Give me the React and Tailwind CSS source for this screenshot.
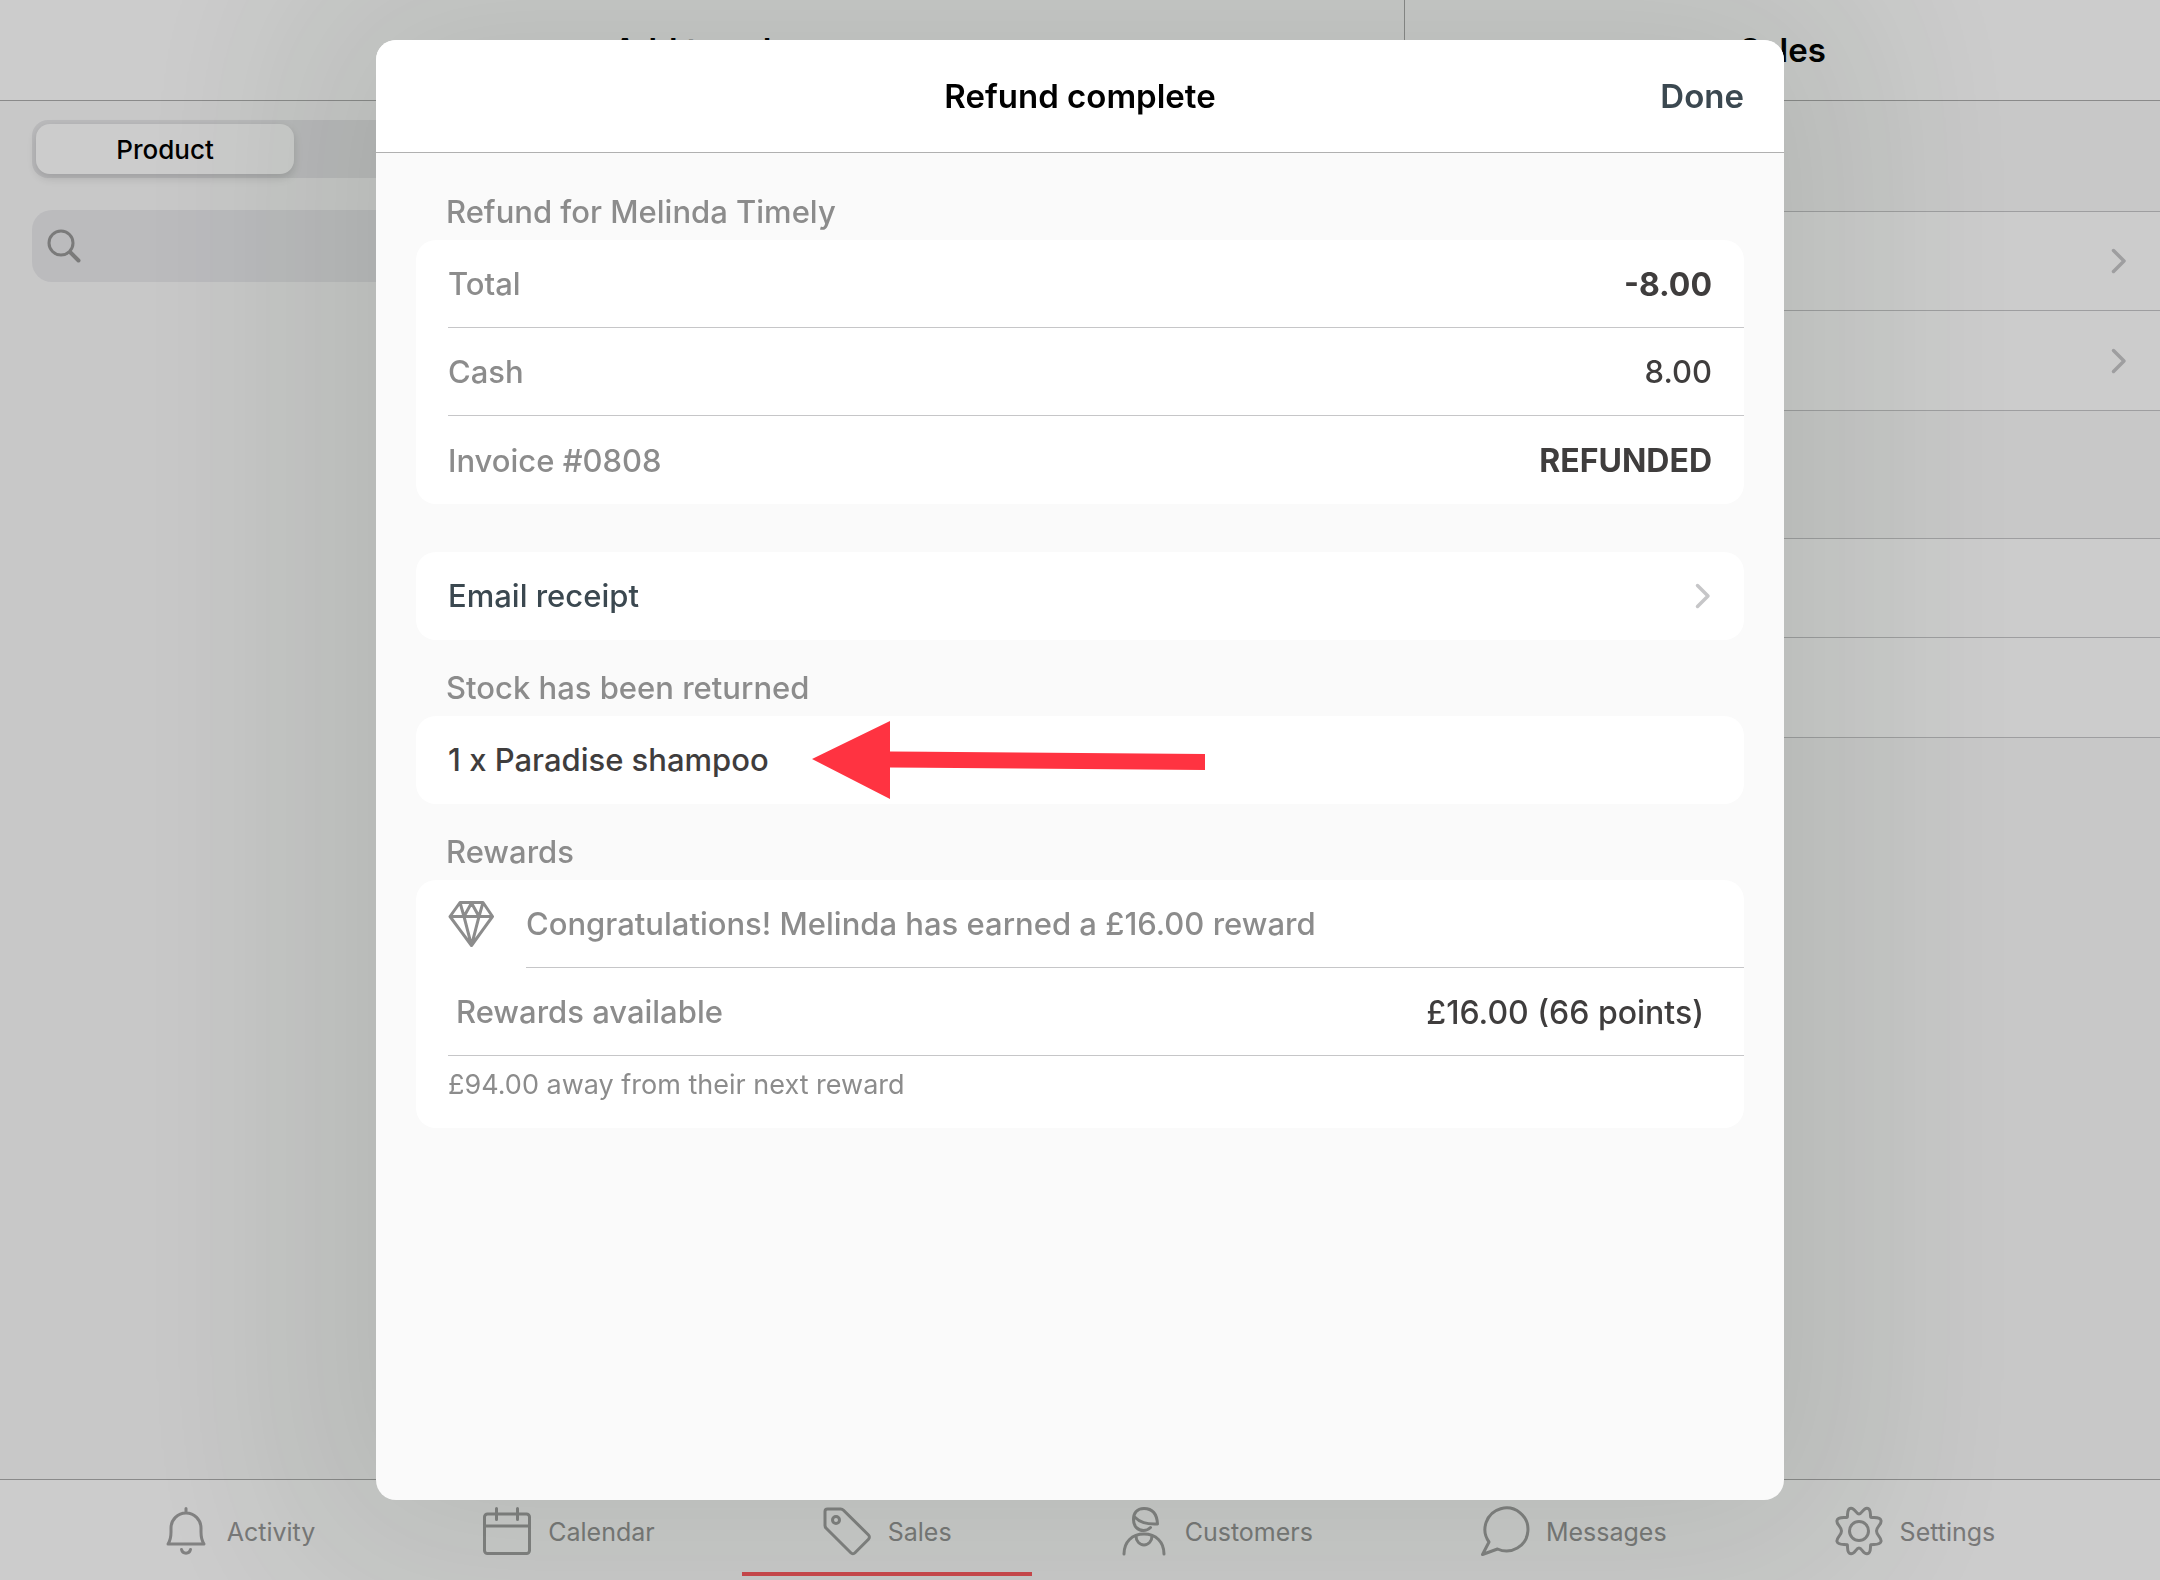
function BellIcon() {
  return (
    <>
      <path d="M25 2.500v4M7 38c2-3 3-7 3-12v-4a15 15 0 0 1 30 0v4c0 5 1 9 3 12z" />
      <path d="M20.500 43.500a4.600 4.600 0 0 0 9 0" />
    </>
  );
}

function CalendarIcon() {
  return (
    <>
      <rect x="2.500" y="8" width="45" height="39.500" rx="3" />
      <path d="M2.500 20h45M14.500 2.500v11M35.500 2.500v11" />
    </>
  );
}

function TagIcon() {
  return (
    <>
      <path d="M5.500 3h13a4 4 0 0 1 3 1.200L46.500 29a3 3 0 0 1 0 4.200L33 46.800a3 3 0 0 1-4.200 0L4.200 22.200a4 4 0 0 1-1.200-3V5.500A2.500 2.500 0 0 1 5.500 3z" />
      <circle cx="14" cy="14" r="3.500" />
    </>
  );
}

function CustomerIcon() {
  return (
    <>
      <path d="M15 10.500c6 6 12 8 23.500 7.500C38 9 34 2.500 25 2.500c-7.500 0-10.500 5-10.500 11 0 7 4.500 11 10 11 3 0 5-1 7-3" />
      <path d="M5 48c0-12 8-20 20-20s20 8 20 20" />
      <path d="M17 30c0 5 3.500 9 8 9s8-4 8-9" />
    </>
  );
}

function MessageIcon() {
  return <path d="M9 36A21.500 21.500 0 1 1 17.500 43L2.500 48.500z" />;
}

function GearIcon() {
  return (
    <>
      <path d="M25 8c3 0 4-6 8-5.800 4.500.3 3 5.800 3.700 9.100 3.300.7 9.300-.8 10.300 3.200.9 3.900-4.500 6-4.500 10.500s5.400 6.600 4.500 10.500c-1 4-7 2.500-10.300 3.200-.7 3.300.8 8.800-3.700 9.100-4 .2-5-5.800-8-5.800s-4 6-8 5.800c-4.500-.3-3-5.800-3.700-9.100-3.300-.7-9.300.8-10.300-3.200C2.100 31.600 7.500 29.500 7.500 25S2.100 18.400 3 14.500c1-4 7-2.500 10.300-3.200.7-3.300-.8-8.800 3.700-9.100 4-.2 5 5.800 8 5.800z" />
      <circle cx="25" cy="25" r="9.500" />
    </>
  );
}

const tabs = [
  { label: "Activity", Icon: BellIcon },
  { label: "Calendar", Icon: CalendarIcon },
  { label: "Sales", Icon: TagIcon, active: true },
  { label: "Customers", Icon: CustomerIcon },
  { label: "Messages", Icon: MessageIcon },
  { label: "Settings", Icon: GearIcon },
];

function TabBar() {
  return (
    <nav className="h-[101px] shrink-0 flex justify-center gap-[7px] pr-1 border-t border-[#adadad] bg-white">
      {tabs.map(({ label, Icon, active }) => (
        <a key={label} href={`#${label.toLowerCase()}`} className="relative flex items-center gap-4 px-20 pt-0.5 text-[25px] text-[#979797]">
          <svg viewBox="0 0 50 50" className="size-[50px]" fill="none" stroke="#a2a2a2" strokeWidth="3" strokeLinecap="round" strokeLinejoin="round">
            <Icon />
          </svg>
          <span className="pt-1">{label}</span>
          {active && <span className="absolute inset-x-0 bottom-1 h-1 bg-[#ff5a5f]" />}
        </a>
      ))}
    </nav>
  );
}

function Chevron() {
  return (
    <svg viewBox="0 0 16 26" className="w-4 h-[26px]" fill="none" stroke="#c6c6c8" strokeWidth="3.500" strokeLinecap="round" strokeLinejoin="round">
      <path d="M2.500 2.500 13 13 2.500 23.500" />
    </svg>
  );
}

function ProductPane() {
  return (
    <section className="flex-1 min-w-0 border-r border-[#adadad]">
      <header className="h-[101px] pt-0.5 flex items-center justify-center border-b border-[#adadad] bg-white">
        <h2 className="text-[33px] font-semibold text-black">Add to sale</h2>
      </header>
      <div className="px-8 pt-[19px] flex flex-col gap-8">
        <div className="flex rounded-2xl bg-[#e8e8ea] p-1 h-[58px]">
          <button className="w-[258px] rounded-[14px] bg-white text-[26px] font-medium text-black shadow-[0_4px_10px_rgba(0,0,0,0.14)]">Product</button>
        </div>
        <label className="flex items-center h-[72px] rounded-[20px] bg-[#eaeaed] px-[15px]">
          <svg viewBox="0 0 34 34" className="size-[34px]" fill="none" stroke="#999" strokeWidth="3" strokeLinecap="round">
            <circle cx="14" cy="14" r="12" />
            <path d="m23.500 23.500 8 8" strokeWidth="4" />
          </svg>
          <input type="search" aria-label="Search products" className="flex-1 bg-transparent outline-none text-[28px]" />
        </label>
      </div>
    </section>
  );
}

function SalesPane() {
  return (
    <section className="w-[755px] shrink-0">
      <header className="h-[101px] pt-0.5 flex items-center justify-center border-b border-[#adadad] bg-white">
        <h2 className="text-[33px] font-semibold text-black">Sales</h2>
      </header>
      <div className="mt-[110px] border-t border-[#c6c6c8] bg-white">
        <button className="w-full h-[99px] px-[33px] flex items-center justify-end border-b border-[#c6c6c8]" aria-label="Open first sale">
          <Chevron />
        </button>
        <button className="w-full h-[100px] px-[33px] flex items-center justify-end border-b border-[#c6c6c8]" aria-label="Open second sale">
          <Chevron />
        </button>
      </div>
      <div className="mt-[127px] border-t border-[#c6c6c8] bg-white">
        <div className="h-[99px] border-b border-[#c6c6c8]" />
        <div className="h-[100px] border-b border-[#c6c6c8]" />
      </div>
    </section>
  );
}

function Card({ children, className = "" }) {
  return <div className={`rounded-[20px] bg-white pl-8 ${className}`}>{children}</div>;
}

function Row({ label, value, bold, divider }) {
  return (
    <div className={`h-[88px] pr-8 pt-0.5 flex items-center justify-between ${divider ? "border-b border-[#c6c6c8]" : ""}`}>
      <dt className="text-[#8c8c8c]">{label}</dt>
      <dd className={bold ? "text-[32px] font-bold text-[#3f3d3d]" : "text-[#3f3d3d]"}>{value}</dd>
    </div>
  );
}

function SectionLabel({ children }) {
  return <h2 className="h-[76px] pl-[30px] pt-[28px] leading-10 text-[#8c8c8c]">{children}</h2>;
}

function DiamondIcon() {
  return (
    <svg viewBox="0 0 46 46" className="size-[46px]" fill="none" stroke="#8c8c8c" strokeWidth="3" strokeLinejoin="round">
      <path d="M12 1.500h23l9.500 14L23.500 44.500 2 15.500zM2 15.500h42.500M12 1.500l4 14L23.500 2 31 15.500l4-14M16 15.500l7.500 29 7.500-29" />
    </svg>
  );
}

// Annotation pointing at the returned stock line
function Arrow() {
  return (
    <svg viewBox="0 0 393 78" className="absolute left-[396px] top-[5px] w-[393px] h-[78px]" fill="#ff3341">
      <path d="M0 38 78 0v30.500L393 33v16L78 46.500V78z" />
    </svg>
  );
}

function RefundDialog() {
  return (
    <div className="fixed inset-0 flex justify-center pt-10 pb-20 bg-black/20">
      <div
        role="dialog"
        aria-modal="true"
        aria-labelledby="refund-title"
        className="w-full max-w-[1408px] rounded-[20px] overflow-hidden bg-[#fafafa] text-[31px] font-medium shadow-[0_0_200px_80px_rgba(15,50,15,0.1)]"
      >
        <header className="h-[113px] px-10 pt-0.5 grid grid-cols-[1fr_auto_1fr] items-center border-b border-[#b0b0b0] bg-white text-[33px] font-semibold">
          <h1 id="refund-title" className="col-start-2 text-black">Refund complete</h1>
          <button className="justify-self-end text-[#3b4850]">Done</button>
        </header>

        <div className="px-10 pt-[11px]">
          <SectionLabel>Refund for Melinda Timely</SectionLabel>
          <Card>
            <dl>
              <Row label="Total" value="-8.00" bold divider />
              <Row label="Cash" value="8.00" divider />
              <Row label="Invoice #0808" value="REFUNDED" bold />
            </dl>
          </Card>

          <button className="mt-12 w-full h-[88px] pl-8 pr-[33px] flex items-center justify-between rounded-[20px] bg-white font-medium text-[#3b4850]">
            Email receipt
            <Chevron />
          </button>

          <SectionLabel>Stock has been returned</SectionLabel>
          <Card className="relative h-[88px] flex items-center text-[#3f3d3d]">
            1 x Paradise shampoo
            <Arrow />
          </Card>

          <SectionLabel>Rewards</SectionLabel>
          <Card>
            <div className="flex items-center gap-8">
              <DiamondIcon />
              <p className="flex-1 h-[88px] pt-0.5 flex items-center border-b border-[#c6c6c8] text-[#8c8c8c]">
                Congratulations! Melinda has earned a £16.00 reward
              </p>
            </div>
            <dl className="h-[88px] pl-2 pr-10 pt-0.5 flex items-center justify-between border-b border-[#c6c6c8]">
              <dt className="text-[#8c8c8c]">Rewards available</dt>
              <dd className="text-[32px] text-[#3f3d3d]">£16.00 (66 points)</dd>
            </dl>
            <p className="h-[72px] pt-[9px] text-[27px] leading-10 font-normal text-[#8c8c8c]">£94.00 away from their next reward</p>
          </Card>
        </div>
      </div>
    </div>
  );
}

export default function App() {
  return (
    <div className="min-h-screen flex flex-col bg-[#fafafa] font-[Inter,'Liberation_Sans',sans-serif]">
      <main className="flex-1 flex">
        <ProductPane />
        <SalesPane />
      </main>
      <TabBar />
      <RefundDialog />
    </div>
  );
}
